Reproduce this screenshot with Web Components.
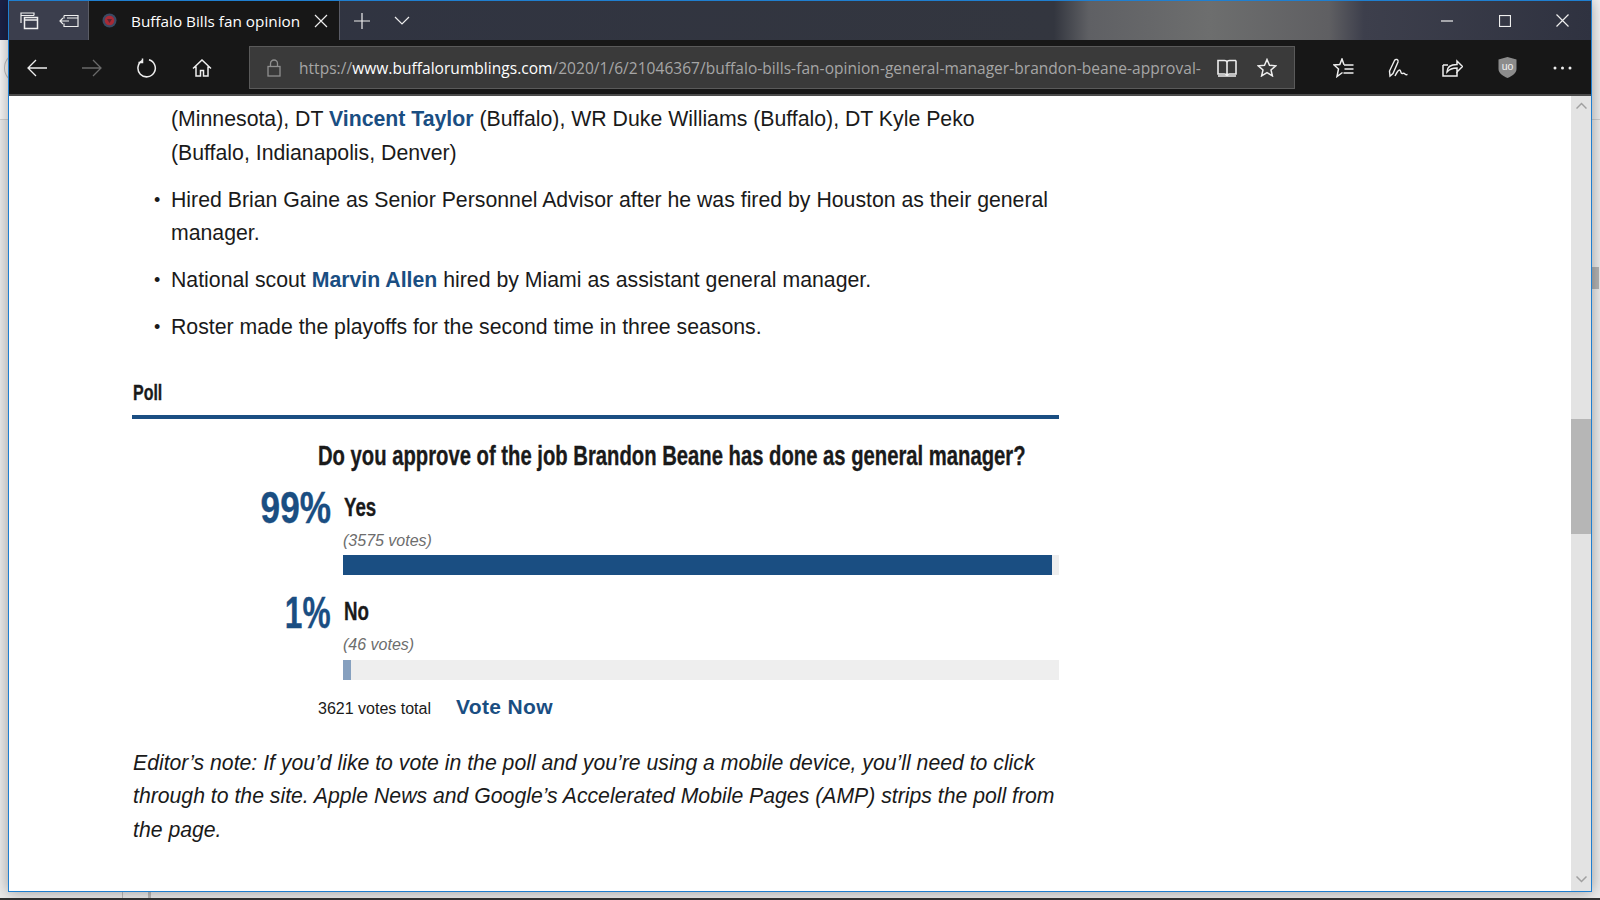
<!DOCTYPE html>
<html>
<head>
<meta charset="utf-8">
<title>Buffalo Bills fan opinion</title>
<style>
  html, body { margin: 0; height: 100%; overflow: hidden; }
  body { background: #e9e9e9; font-family: "Liberation Sans", Arial, sans-serif; }
</style>
</head>
<body>
<desktop-backdrop>
  <browser-window>
    <tab-strip title-text="Buffalo Bills fan opinion"></tab-strip>
    <nav-toolbar></nav-toolbar>
    <page-view>
      <article-body>
        <ul>
          <li class="cont">(Minnesota), DT <a>Vincent Taylor</a> (Buffalo), WR Duke Williams (Buffalo), DT Kyle Peko<br>(Buffalo, Indianapolis, Denver)</li>
          <li>Hired Brian Gaine as Senior Personnel Advisor after he was fired by Houston as their general manager.</li>
          <li>National scout <a>Marvin Allen</a> hired by Miami as assistant general manager.</li>
          <li>Roster made the playoffs for the second time in three seasons.</li>
        </ul>
        <poll-result question="Do you approve of the job Brandon Beane has done as general manager?" total="3621 votes total">
          <poll-option pct="99%" squeeze=".8" label="Yes" votes="(3575 votes)" fill="99"></poll-option>
          <poll-option pct="1%" squeeze=".72" label="No" votes="(46 votes)" fill="1.1" faded></poll-option>
        </poll-result>
        <p class="note">Editor’s note: If you’d like to vote in the poll and you’re using a mobile device, you’ll need to click through to the site. Apple News and Google’s Accelerated Mobile Pages (AMP) strips the poll from the page.</p>
      </article-body>
    </page-view>
  </browser-window>
</desktop-backdrop>

<script>
class DesktopBackdrop extends HTMLElement {
  constructor() {
    super()
    this.attachShadow({ mode: 'open' })
    this.shadowRoot.innerHTML = `
      <style>
        :host { display: block; position: relative; width: 1600px; height: 900px; overflow: hidden; background: #ececec; }
        .navy { position: absolute; left: 0; top: 0; width: 9px; height: 40px; background: #1b2145; }
        .white { position: absolute; left: 0; top: 40px; width: 9px; height: 79px; background: #f7f7f7; border-bottom: 1px solid #d4d4d4; overflow: hidden; }
        .ring { position: absolute; left: 4px; top: 14px; width: 22px; height: 26px; border: 1px solid #bdbdbd; border-radius: 50%; }
        .top-right { position: absolute; right: 0; top: 0; width: 8px; height: 40px; background: #f4f4f4; }
        .line { position: absolute; right: 0; top: 119px; width: 8px; height: 1px; background: #cfcfcf; }
        .outer-thumb { position: absolute; right: 1px; top: 267px; width: 7px; height: 22px; background: #b4b4b4; }
        .bottom { position: absolute; left: 0; right: 0; bottom: 0; height: 2px; background: #333; }
        .tick { position: absolute; bottom: 2px; width: 1px; height: 6px; background: #bbb; }
      </style>
      <div class="navy"></div>
      <div class="white"><div class="ring"></div></div>
      <div class="top-right"></div>
      <div class="line"></div>
      <div class="outer-thumb"></div>
      <div class="tick" style="left:122px"></div>
      <div class="tick" style="left:148px;width:3px"></div>
      <div class="bottom"></div>
      <slot></slot>
    `
  }
}

class BrowserWindow extends HTMLElement {
  constructor() {
    super()
    this.attachShadow({ mode: 'open' })
    this.shadowRoot.innerHTML = `
      <style>
        :host {
          position: absolute; left: 8px; top: 0; width: 1584px; height: 892px; box-sizing: border-box;
          display: flex; flex-direction: column;
          border: 1px solid #1f7fd0; background: #fff;
          box-shadow: 0 0 14px rgba(0,0,0,.35);
        }
      </style>
      <slot></slot>
    `
  }
}

class TabStrip extends HTMLElement {
  constructor() {
    super()
    this.attachShadow({ mode: 'open' })
    const title = this.getAttribute('title-text')
    this.shadowRoot.innerHTML = `
      <style>
        :host {
          display: flex; height: 39px; flex: none; color: #fff;
          background: linear-gradient(90deg, #2f3342 0, #33363f 1045px, #5f6064 1080px, #6d6e6e 1200px, #5f5f62 1320px, #3d3f4c 1355px, #2f3240 1583px);
        }
        svg { display: block; fill: none; stroke: #eee; stroke-width: 1.2; }
        .btn { width: 39px; display: flex; align-items: center; justify-content: center; }
        .left { display: flex; width: 80px; background: #3b3e4d; box-sizing: border-box; border-right: 1px solid #5a5c66; }
        .tab {
          width: 251px; background: #171717; display: flex; align-items: center; box-sizing: border-box;
          padding-left: 13px; border-right: 1px solid #5a5c66;
          font: 15.300px "Open Sans", sans-serif; white-space: nowrap;
        }
        .tab span { margin-left: 14px; width: 183px; }
        .new { width: 44px; display: flex; align-items: center; justify-content: center; }
        .chev { width: 36px; display: flex; align-items: center; justify-content: center; }
        .fill { flex: 1; }
        .win { width: 57.500px; display: flex; align-items: center; justify-content: center; }
      </style>
      <div class="left">
        <div class="btn"><svg width="20" height="20" viewBox="0 0 20 20"><path d="M2 12V2h13v2.500M2 4.500h13"/><rect x="5.500" y="6.500" width="13" height="11" stroke-width="1.500"/><path d="M5.500 9h13" stroke-width="1.500"/></svg></div>
        <div class="btn"><svg width="22" height="18" viewBox="0 0 22 18" style="margin-left:2px"><path d="M6 3.500h14v11H6v-3M6 6.500v-3M9 6h11"/><path d="M11 9H2M5 6 2 9l3 3"/></svg></div>
      </div>
      <div class="tab">
        <svg width="15" height="15" viewBox="0 0 15 15" style="stroke:none"><circle cx="7.500" cy="7.500" r="7" fill="#3b4a63"/><circle cx="7.500" cy="7.500" r="4.800" fill="#a82a35"/><path d="M5 6h5L7.500 10z" fill="#5a2433"/></svg>
        <span>${title}</span>
        <svg width="14" height="14" viewBox="0 0 14 14"><path d="M1 1l12 12M13 1 1 13"/></svg>
      </div>
      <div class="new"><svg width="16" height="16" viewBox="0 0 16 16"><path d="M8 0v16M0 8h16"/></svg></div>
      <div class="chev"><svg width="16" height="10" viewBox="0 0 16 10"><path d="M1 1l7 7 7-7"/></svg></div>
      <div class="fill"></div>
      <div class="win"><svg width="12" height="2" viewBox="0 0 12 2"><path d="M0 1h12"/></svg></div>
      <div class="win"><svg width="12" height="12" viewBox="0 0 12 12"><rect x=".5" y=".5" width="11" height="11"/></svg></div>
      <div class="win"><svg width="13" height="13" viewBox="0 0 13 13"><path d="M.5.5l12 12M12.500.5l-12 12"/></svg></div>
    `
  }
}

class NavToolbar extends HTMLElement {
  constructor() {
    super()
    this.attachShadow({ mode: 'open' })
    this.shadowRoot.innerHTML = `
      <style>
        :host {
          display: flex; align-items: center; height: 56px; flex: none; box-sizing: border-box;
          background: #171717; border-bottom: 2px solid #4a4a4a; padding: 1px 0 0 1px;
        }
        svg { display: block; fill: none; stroke: #eee; stroke-width: 1.300; }
        .b { width: 54.800px; flex: none; display: flex; align-items: center; justify-content: center; }
        .url {
          width: 1046px; height: 43px; box-sizing: border-box; margin-left: 19.800px; margin-right: 21px; flex: none;
          background: #3a3a3a; border: 1px solid #5a5a5a; display: flex; align-items: center; color: #a6a6a6;
        }
        .lock { width: 49px; flex: none; display: flex; justify-content: center; }
        .addr {
          width: 905px; overflow: hidden; white-space: nowrap; flex: none; padding-top: 1px;
          font: 15.500px/24px "Open Sans", sans-serif; letter-spacing: .04px;
        }
        .addr b { font-weight: 400; color: #fff; }
        .in { width: 40px; flex: none; display: flex; justify-content: center; }
      </style>
      <div class="b"><svg width="20" height="18" viewBox="0 0 20 18"><path d="M20 9H1M9 1 1 9l8 8"/></svg></div>
      <div class="b"><svg width="20" height="18" viewBox="0 0 20 18" style="stroke:#6a6a6a"><path d="M0 9h19M11 1l8 8-8 8"/></svg></div>
      <div class="b"><svg width="20" height="20" viewBox="0 0 20 20" style="stroke-width:1.500"><path d="M5.500 2.500A8.700 8.700 0 1 0 12 1.800"/><path d="M5.500 .5v4h-4"/></svg></div>
      <div class="b"><svg width="20" height="18" viewBox="0 0 20 18" style="stroke-width:1.500"><path d="M1 9.500 10 1l9 8.500M4 7.500V17h4.500v-5.500h3V17H16V7.500"/></svg></div>
      <div class="url">
        <div class="lock"><svg width="14" height="18" viewBox="0 0 14 18" style="stroke:#8f8f8f"><rect x="1" y="7.500" width="12" height="9.500"/><path d="M3.500 7.500V4.500a3.500 3.500 0 0 1 7 0v3"/></svg></div>
        <div class="addr">https://<b>www.buffalorumblings.com</b>/2020/1/6/21046367/buffalo-bills-fan-opinion-general-manager-brandon-beane-approval-</div>
        <div class="in" style="margin-left:3px"><svg width="20" height="18" viewBox="0 0 20 18" style="stroke-width:1.600"><path d="M1 1.500h6.500q2.500 0 2.500 2v13q-.5-1.500-2.500-1.500H1zM19 1.500h-6.500Q10 1.500 10 3.500M19 1.500V15h-6.500Q10.500 15 10 16.500M1 17h18"/></svg></div>
        <div class="in"><svg width="20" height="19" viewBox="0 0 20 19" style="stroke-width:1.500"><path d="m10 1.500 2.500 5.700 6.200.6-4.700 4.100 1.400 6-5.400-3.200-5.400 3.200 1.400-6L1.300 7.800l6.200-.6z"/></svg></div>
      </div>
      <div class="b"><svg width="21" height="20" viewBox="0 0 21 20" style="stroke-width:1.500"><path d="M11 6.800 9 1 6.800 6.500 1 7l4.500 4L4 18.500l5.500-4"/><path d="M11 7h9.500M11.500 11h9M10.500 15h10"/></svg></div>
      <div class="b"><svg width="20" height="20" viewBox="0 0 20 20" style="stroke-width:1.400"><path d="M2 18 1.500 13 6.500 2.500q1-1.500 2.500-1t1 2.500L5 15.500z"/><path d="M7 18c2-4 3-6 4.500-6s1 3.500 2.500 3.500 1.500-1 3 .5 1.500.5 2.500.5"/></svg></div>
      <div class="b"><svg width="21" height="18" viewBox="0 0 21 18" style="stroke-width:1.500"><path d="M1 6v11h14v-4M1 6h5"/><path d="M5 13c0-5 4-7.500 10-7.500V2l5.500 5.500-5.500 5.500V9c-4 0-7.500 1-10 4z"/></svg></div>
      <div class="b">
        <svg width="19" height="21" viewBox="0 0 19 21" style="stroke:none"><path d="M9.500 0 18.500 2.500V12c0 4-4 7-9 9-5-2-9-5-9-9V2.500z" fill="#8c8c8c"/><text x="9.500" y="13" text-anchor="middle" font-family="Liberation Sans" font-size="10.500" fill="#f2f2f2">uo</text></svg>
      </div>
      <div class="b"><svg width="19" height="4" viewBox="0 0 19 4" style="stroke:none;fill:#eee"><circle cx="2" cy="2" r="1.500"/><circle cx="9.500" cy="2" r="1.500"/><circle cx="17" cy="2" r="1.500"/></svg></div>
    `
  }
}

class PageView extends HTMLElement {
  constructor() {
    super()
    this.attachShadow({ mode: 'open' })
    this.shadowRoot.innerHTML = `
      <style>
        :host { display: flex; flex: 1; min-height: 0; background: #fff; }
        .content { flex: 1; overflow: hidden; min-width: 0; }
        .rail { width: 20px; flex: none; background: #e3e3e3; display: flex; flex-direction: column; }
        .rail svg { display: block; margin: 6px auto 0; fill: none; stroke: #a0a0a0; stroke-width: 1.500; }
        .up { height: 323px; }
        .thumb { height: 115px; background: #b6b6b6; }
        .rest { flex: 1; display: flex; align-items: flex-end; justify-content: center; padding-bottom: 8px; }
      </style>
      <div class="content"><slot></slot></div>
      <div class="rail">
        <div class="up"><svg width="11" height="7" viewBox="0 0 11 7"><path d="M.5 6.500l5-5 5 5"/></svg></div>
        <div class="thumb"></div>
        <div class="rest"><svg width="11" height="7" viewBox="0 0 11 7" style="margin:0"><path d="M.5.5l5 5 5-5"/></svg></div>
      </div>
    `
  }
}

class ArticleBody extends HTMLElement {
  constructor() {
    super()
    this.attachShadow({ mode: 'open' })
    this.shadowRoot.innerHTML = `
      <style>
        :host { display: block; width: 927px; padding: 7px 0 0 123px; font: 21.280px/33.600px "Liberation Sans", Arial, sans-serif; color: #1a1a1a; }
        ::slotted(ul) { list-style: none; margin: 0; padding: 0; }
        ::slotted(.note) { margin: 0 0 0 1px; width: 935px; font-size: 21.230px; font-style: italic; }
      </style>
      <slot></slot>
    `
  }
  connectedCallback() {
    // list items and links sit in the light DOM, so they get their look here
    const style = document.createElement('style')
    style.textContent = `
      article-body li { position: relative; margin-left: 39px; margin-bottom: 13.400px; }
      article-body li::before { content: "•"; position: absolute; left: -17px; font-size: 18px; }
      article-body li.cont::before { content: none; }
      article-body a { color: #1a4e82; font-weight: 700; }
    `
    document.head.appendChild(style)
  }
}

class PollResult extends HTMLElement {
  constructor() {
    super()
    this.attachShadow({ mode: 'open' })
    this.shadowRoot.innerHTML = `
      <style>
        :host { display: block; margin-top: 33px; margin-bottom: 25px; }
        .cond { display: inline-block; white-space: nowrap; transform-origin: left center; -webkit-text-stroke: .35px currentColor; }
        .head {
          font: 700 22.500px/30px "Liberation Sans", sans-serif; color: #1a1a1a;
          border-bottom: 4px solid #1a4e82; padding-bottom: 7px;
        }
        .head .cond { transform: scaleX(.71); margin-left: 1px; }
        .q {
          margin: 19px 0 0 186px; height: 36px;
          font: 700 28px/36px "Liberation Sans", sans-serif; color: #1a1a1a;
        }
        .q .cond { transform: scaleX(.723); }
        .foot { display: flex; align-items: baseline; margin: 11px 0 0 186px; }
        .total { font-size: 16px; line-height: 24px; color: #1a1a1a; }
        .vote { margin-left: 25px; font-size: 21px; line-height: 24px; font-weight: 700; color: #1a4e82; letter-spacing: .35px; }
      </style>
      <div class="head"><span class="cond">Poll</span></div>
      <div class="q"><span class="cond">${this.getAttribute('question')}</span></div>
      <slot></slot>
      <div class="foot"><span class="total">${this.getAttribute('total')}</span><span class="vote">Vote Now</span></div>
    `
  }
}

class PollOption extends HTMLElement {
  constructor() {
    super()
    this.attachShadow({ mode: 'open' })
    const faded = this.hasAttribute('faded')
    this.shadowRoot.innerHTML = `
      <style>
        :host { display: grid; grid-template-columns: 198px 716px; column-gap: 13px; margin-top: 9px; height: 96px; }
        .pct {
          text-align: right; color: #1a4e82;
          font: 700 44px/50px "Liberation Sans", sans-serif;
        }
        .pct span { display: inline-block; margin-right: -1px; transform: scaleX(${this.getAttribute('squeeze')}); transform-origin: right center; -webkit-text-stroke: .35px currentColor; }
        .label { font: 700 26px/32px "Liberation Sans", sans-serif; color: #1a1a1a; padding-top: ${faded ? 7 : 8}px; }
        .label span { display: inline-block; margin-left: 1px; transform: scaleX(.72); transform-origin: left center; -webkit-text-stroke: .35px currentColor; }
        .votes { font: italic 16px/24px "Liberation Sans", sans-serif; color: #6d6d6d; margin-top: 6px; }
        .track { height: 20px; margin-top: ${faded ? 3 : 2}px; background: #eee; }
        .bar { height: 100%; background: ${faded ? '#86a0bf' : '#1a4e82'}; width: ${this.getAttribute('fill')}%; }
      </style>
      <div class="pct"><span>${this.getAttribute('pct')}</span></div>
      <div>
        <div class="label"><span>${this.getAttribute('label')}</span></div>
        <div class="votes">${this.getAttribute('votes')}</div>
        <div class="track"><div class="bar"></div></div>
      </div>
    `
  }
}

customElements.define('desktop-backdrop', DesktopBackdrop)
customElements.define('browser-window', BrowserWindow)
customElements.define('tab-strip', TabStrip)
customElements.define('nav-toolbar', NavToolbar)
customElements.define('page-view', PageView)
customElements.define('article-body', ArticleBody)
customElements.define('poll-result', PollResult)
customElements.define('poll-option', PollOption)
</script>
</body>
</html>
